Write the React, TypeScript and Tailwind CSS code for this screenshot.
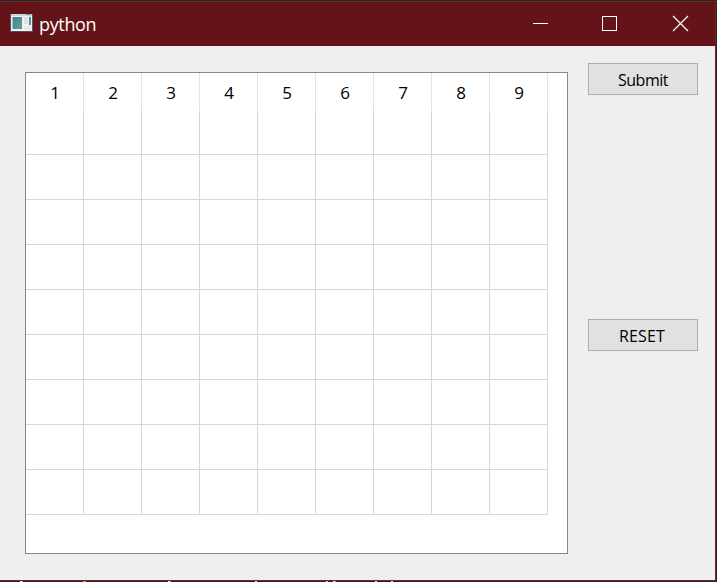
import React from "react";

const columns = [1, 2, 3, 4, 5, 6, 7, 8, 9];
const rows = [1, 2, 3, 4, 5, 6, 7, 8, 9];

function AppIcon() {
  return (
    <svg className="ml-[10px] block h-5 w-[23px] shrink-0" viewBox="0 0 23 20" shapeRendering="crispEdges">
      <defs>
        <linearGradient id="pane" x1="0" y1="0" x2="1" y2="1">
          <stop offset="0" stopColor="#4a7fa5" />
          <stop offset="1" stopColor="#57a882" />
        </linearGradient>
      </defs>
      <rect x="0" y="1" width="23" height="18" fill="#59505e" />
      <rect x="1" y="1" width="21" height="17" fill="#f1f2f3" />
      <rect x="1" y="1" width="21" height="2" fill="#cbd5dc" />
      <rect x="16" y="1" width="5" height="1" fill="#8594a5" />
      <rect x="2" y="4" width="10" height="12" fill="#a9bdc4" />
      <rect x="3" y="4" width="9" height="12" fill="url(#pane)" />
      <rect x="14" y="4" width="4" height="7" fill="#e0e3e4" />
      <rect x="19" y="4" width="2" height="8" fill="url(#pane)" />
      <rect x="14" y="13" width="7" height="4" fill="#e8e9e9" />
    </svg>
  );
}

function TitleBar() {
  return (
    <header className="flex h-[45px] shrink-0 border-t border-[#692e31] bg-[#641318] text-white">
      <div className="flex flex-1 pt-[11px]">
        <AppIcon />
        <span className="-mt-px ml-[6px] text-[18px] leading-6 tracking-[-0.35px]">python</span>
      </div>
      <svg className="h-[44px] w-[210px]" viewBox="505 2 210 44" fill="none" stroke="white">
        <path d="M533 23.5H548" />
        <rect x="602.5" y="16.5" width="14" height="14" />
        <path d="M673 16L688 31M688 16L673 31" strokeWidth="1.2" />
      </svg>
    </header>
  );
}

function Grid() {
  return (
    <div className="mt-[26px] ml-[25px] h-[482px] w-[543px] shrink-0 border border-[#828790] bg-white">
      <div className="flex h-[37px]">
        {columns.map((n) => (
          <div key={n} className="w-[58px] border-r border-[#e5e5e5] pt-[8px] pl-px text-center text-[17px] leading-6">
            {n}
          </div>
        ))}
      </div>
      {rows.map((row) => (
        <div key={row} className="flex h-[45px]">
          {columns.map((col) => (
            <div key={col} className="w-[58px] border-r border-b border-[#d8d8d8]" />
          ))}
        </div>
      ))}
    </div>
  );
}

function BackgroundSliver() {
  return (
    <svg className="block h-px w-full shrink-0" viewBox="0 0 717 1" shapeRendering="crispEdges">
      <rect width="717" height="1" fill="#272822" />
      <path d="M20 .5h2M168 .5h2M255 .5h2M326 .5h1M333 .5h2M375 .5h2M391 .5h2" stroke="#f4f5f7" />
      <path d="M22 .5h1M83 .5h3M170 .5h1M327 .5h1M335 .5h1" stroke="#d08b43" />
    </svg>
  );
}

export default function App() {
  return (
    <div className="flex h-[582px] w-[717px] flex-col overflow-hidden bg-[#272822] pt-px font-['Open_Sans','Noto_Sans',sans-serif] text-black">
      <div className="flex h-[580px] w-[716px] flex-col border-r border-b border-[#74202a] bg-[#efefef]">
        <TitleBar />
        <main className="flex flex-1">
          <Grid />
          <div className="ml-[20px] flex flex-col pt-[17px] text-[16px] leading-6">
            <button className="h-8 w-[110px] border border-[#adadad] bg-[#e1e1e1] pt-px tracking-[-0.45px]">Submit</button>
            <button className="mt-[224px] h-8 w-[110px] border border-[#adadad] bg-[#e1e1e1] pt-px pr-[2px] tracking-[0.2px]">RESET</button>
          </div>
        </main>
      </div>
      <BackgroundSliver />
    </div>
  );
}
